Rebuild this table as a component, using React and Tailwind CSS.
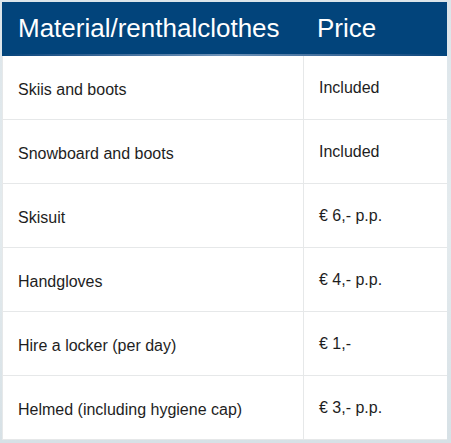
export default function App() {
  const rows = [
    ["Skiis and boots", "Included"],
    ["Snowboard and boots", "Included"],
    ["Skisuit", "€ 6,- p.p."],
    ["Handgloves", "€ 4,- p.p."],
    ["Hire a locker (per day)", "€ 1,-"],
    ["Helmed (including hygiene cap)", "€ 3,- p.p."],
  ];
  return (
    <div
      className="w-[451px] h-[443px] pl-[2px] pt-[2px] bg-gradient-to-b from-[#dce5ea] via-[#e4ebee] to-[#d7e1e6]"
      style={{ fontFamily: '"Liberation Sans", Arial, sans-serif' }}
    >
      <div className="w-[445px] bg-white">
        <div className="flex flex-col bg-[#02447b]">
          <div className="flex h-[52px] items-center text-white text-[26px]">
            <div className="w-[302px] pl-[16px]">Material/renthalclothes</div>
            <div className="pl-[13px]">Price</div>
          </div>
          <div className="h-[2px] bg-gradient-to-r from-[#02447b] via-[#6f93b8] to-[#02447b]" />
        </div>
        {rows.map(([a, b], i) => (
          <div key={i} className="flex h-[64px] border-b border-[#e6e8e9] border-l border-l-[#e6e8e9]">
            <div className="w-[301px] border-r border-[#e6e8e9] flex items-center pl-[15px] pt-[4px] text-[16px] text-[#1e1e1e]">
              {a}
            </div>
            <div className="flex-1 flex items-center pl-[15px] text-[16px] text-[#1e1e1e]">
              {b}
            </div>
          </div>
        ))}
      </div>
    </div>
  );
}
